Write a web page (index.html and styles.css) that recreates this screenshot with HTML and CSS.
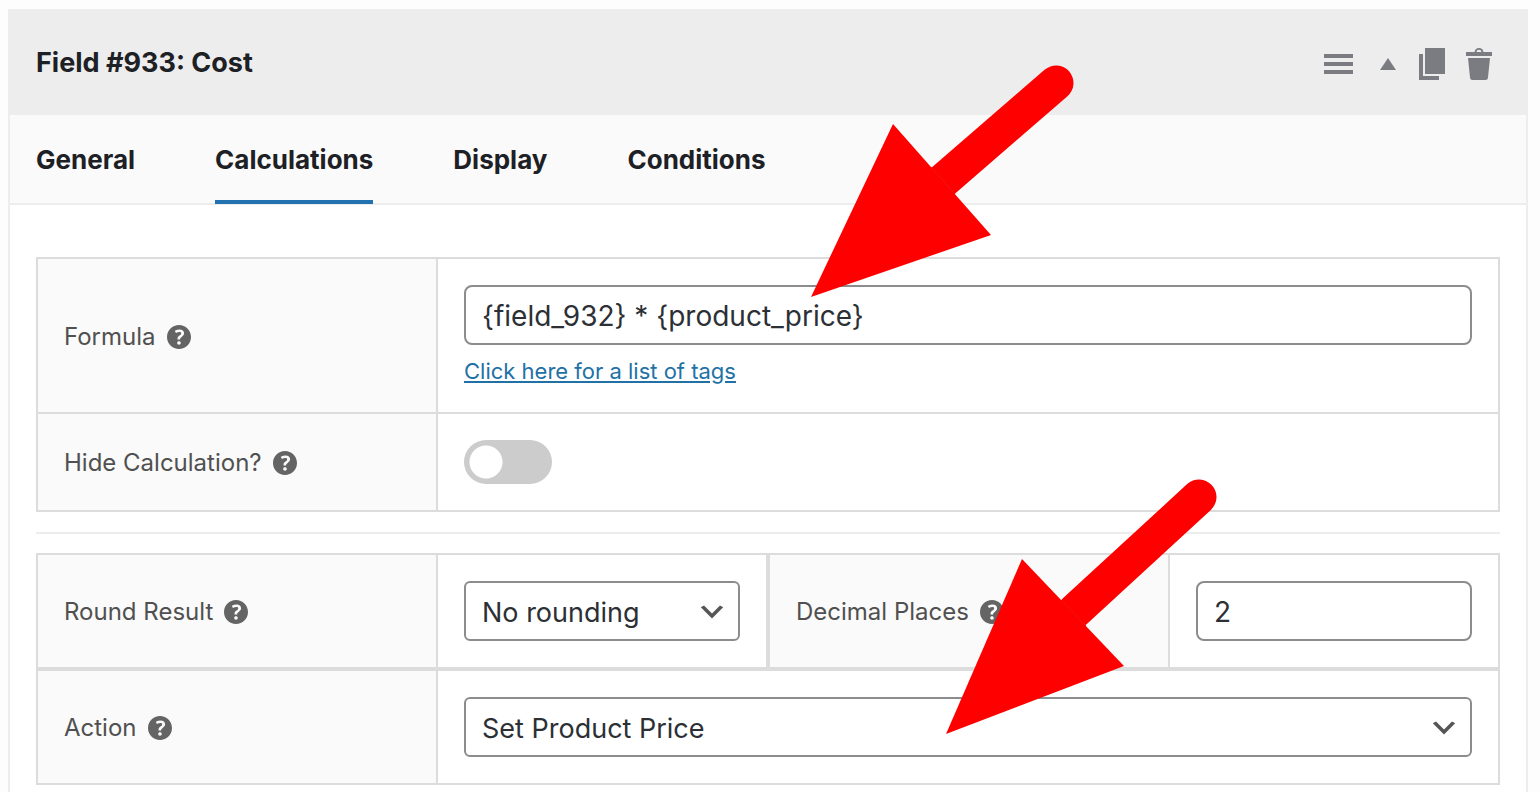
FILE: index.html
```html
<!DOCTYPE html>
<html lang="en">
<head>
<meta charset="utf-8">
<title>Field #933: Cost</title>
<link rel="stylesheet" href="styles.css">
</head>
<body>
<svg class="symbols" aria-hidden="true">
  <symbol id="help" viewBox="3 3 14 14"><path d="M17 10c0-3.87-3.14-7-7-7-3.87 0-7 3.13-7 7s3.13 7 7 7c3.86 0 7-3.13 7-7zm-6.3 1.48H9.14v-.43c0-.38.08-.7.24-.98s.46-.57.88-.89c.41-.29.68-.53.81-.71.14-.18.2-.39.2-.62 0-.25-.09-.44-.28-.58-.19-.13-.45-.19-.79-.19-.58 0-1.25.19-2 .57l-.64-1.28c.87-.49 1.8-.74 2.77-.74.81 0 1.45.2 1.92.58.48.39.71.91.71 1.55 0 .43-.09.8-.29 1.11-.19.32-.57.67-1.11 1.06-.38.28-.61.49-.71.63-.1.15-.15.34-.15.57v.35zm-1.47 2.74c-.18-.17-.27-.42-.27-.73 0-.33.08-.58.26-.75s.43-.25.77-.25c.32 0 .57.09.75.26s.27.42.27.74c0 .3-.09.55-.27.72-.18.18-.43.27-.75.27-.33 0-.58-.09-.76-.26z"/></symbol>
  <symbol id="chevron" viewBox="0 0 20 20"><path d="M5 6l5 5 5-5 2 1-7 7-7-7 2-1z"/></symbol>
</svg>

<main class="card">
  <header class="card-header">
    <h1 class="card-title">Field #933: Cost</h1>
    <div class="actions">
      <button class="action" type="button" aria-label="Reorder"><svg viewBox="0 -4 32 36"><path d="M2 6h29v4H2zM2 14h29v4H2zM2 22h29v4H2z"/></svg></button>
      <button class="action" type="button" aria-label="Collapse"><svg viewBox="0 -4 32 36"><path d="M11 22l8-12 8 12z"/></svg></button>
      <button class="action" type="button" aria-label="Duplicate"><svg viewBox="0 -4 32 36"><path d="M9 0h20v26H9zM3 6h4v22h16v4H3z"/></svg></button>
      <button class="action" type="button" aria-label="Delete"><svg viewBox="0 -4 32 36"><path d="M3 4h8.500C12 1.500 13.500 0 16 0s4 1.500 4.500 4H29v4H3zM13.500 4h5c-.3-1.500-1-2.300-2.500-2.300S13.800 2.500 13.500 4zM5 10h22l-2 19.500c-.2 1.700-1 2.500-2.500 2.500h-13C8 32 7.200 31.200 7 29.500z" fill-rule="evenodd"/></svg></button>
    </div>
  </header>

  <nav class="tabs">
    <a class="tab" href="#general">General</a>
    <a class="tab tab-active" href="#calculations" aria-current="page">Calculations</a>
    <a class="tab" href="#display">Display</a>
    <a class="tab" href="#conditions">Conditions</a>
  </nav>

  <div class="panel">
    <section class="group">
      <div class="field">
        <div class="field-label"><label for="formula">Formula</label><svg class="help"><use href="#help"/></svg></div>
        <div class="field-control">
          <input class="control" id="formula" type="text" value="{field_932} * {product_price}">
          <a class="tags-link" href="#tags">Click here for a list of tags</a>
        </div>
      </div>
      <div class="field">
        <div class="field-label"><label for="hide">Hide Calculation?</label><svg class="help"><use href="#help"/></svg></div>
        <div class="field-control"><input class="toggle" id="hide" type="checkbox"></div>
      </div>
    </section>

    <hr class="divider">

    <section class="group group-wide">
      <div class="pair">
        <div class="field">
          <div class="field-label"><label for="round">Round Result</label><svg class="help"><use href="#help"/></svg></div>
          <div class="field-control">
            <div class="select"><select class="control" id="round"><option>No rounding</option></select><svg class="chevron"><use href="#chevron"/></svg></div>
          </div>
        </div>
        <div class="field">
          <div class="field-label"><label for="decimals">Decimal Places</label><svg class="help"><use href="#help"/></svg></div>
          <div class="field-control"><input class="control" id="decimals" type="text" value="2"></div>
        </div>
      </div>
      <div class="field">
        <div class="field-label"><label for="action">Action</label><svg class="help"><use href="#help"/></svg></div>
        <div class="field-control">
          <div class="select"><select class="control" id="action"><option>Set Product Price</option></select><svg class="chevron"><use href="#chevron"/></svg></div>
        </div>
      </div>
    </section>
  </div>
</main>

<svg class="arrows" width="1540" height="792" viewBox="0 0 1540 792" aria-hidden="true">
  <path class="shaft" d="M1056 83L944 180"/>
  <path d="M811 297L893 124 991 235z"/>
  <path class="seam" d="M931 167L955 194"/>
  <path class="shaft" d="M1199 497L1075 611"/>
  <path d="M946 734L1022 559 1124 666z"/>
  <path class="seam" d="M1061 600L1086 626"/>
</svg>
</body>
</html>
```
FILE: styles.css
```css
* {
  box-sizing: border-box;
}

body {
  margin: 0;
  padding: 9px 12px 0 8px;
  background: #fdfdfd;
  color: #1d2024;
  font-family: Inter, "Liberation Sans", sans-serif;
}

.symbols {
  display: none;
}

.card {
  min-height: calc(100vh - 9px);
  border: 2px solid #ededed;
  border-bottom: 0;
  background: #fff;
}

.card-header {
  display: flex;
  align-items: center;
  justify-content: space-between;
  height: 104px;
  padding: 0 31px 2px 26px;
  background: #ededed;
}

.card-title {
  margin: 0;
  padding-top: 2px;
  font-size: 27px;
  line-height: 32px;
  font-weight: 700;
}

.actions {
  display: flex;
  gap: 15px;
}

.action {
  width: 32px;
  height: 36px;
  padding: 0;
  border: 0;
  background: none;
}

.action svg {
  display: block;
  width: 32px;
  height: 36px;
  fill: #7b7c81;
}

.tabs {
  display: flex;
  gap: 80px;
  padding: 0 26px;
  border-bottom: 2px solid #ededed;
  background: #fafafa;
}

.tab {
  height: 89px;
  margin-bottom: -1px;
  border-bottom: 4px solid transparent;
  color: inherit;
  font-size: 26px;
  line-height: 90px;
  font-weight: 700;
  text-decoration: none;
}

.tab-active {
  border-color: #2271b1;
}

.panel {
  padding: 52px 26px 0;
}

.group {
  display: grid;
  gap: 2px;
  border: 2px solid #dcdcdc;
  background: #dcdcdc;
}

.group-wide {
  gap: 4px;
}

.pair {
  display: grid;
  grid-template-columns: 1fr 1fr;
  gap: 4px;
}

.field {
  display: grid;
  grid-template-columns: 398px 1fr;
  gap: 2px;
}

.field-label {
  display: flex;
  align-items: center;
  gap: 11px;
  padding: 2px 26px 0;
  background: #fafafa;
  color: #505050;
  font-size: 24px;
  line-height: 30px;
}

.help {
  width: 24px;
  height: 24px;
  fill: #646464;
}

.field-control {
  min-width: 0;
  padding: 26px;
  background: #fff;
}

.control {
  display: block;
  width: 100%;
  height: 60px;
  margin: 0;
  padding: 2px 16px 0;
  border: 2px solid #8c8c8c;
  border-radius: 8px;
  background: #fff;
  color: #2c3035;
  font-family: inherit;
  font-size: 28px;
  appearance: none;
}

.select {
  position: relative;
}

.select .control {
  border-radius: 6px;
  font-size: 27px;
}

.chevron {
  position: absolute;
  top: 15px;
  right: 12px;
  width: 32px;
  height: 32px;
  fill: #555;
  pointer-events: none;
}

.tags-link {
  display: table;
  margin-top: 11px;
  color: #2271a6;
  font-size: 22px;
  line-height: 30px;
}

.toggle {
  display: block;
  width: 88px;
  height: 44px;
  margin: 0;
  border-radius: 22px;
  background: radial-gradient(circle at 22px 22px, #fff 16px, #ccc 17px);
  appearance: none;
}

.divider {
  height: 2px;
  margin: 20px 0 19px;
  border: 0;
  background: #ededed;
}

.arrows {
  position: absolute;
  top: 0;
  left: 0;
  fill: #f00;
  pointer-events: none;
}

.shaft {
  stroke: #f00;
  stroke-width: 35;
  stroke-linecap: round;
}

.seam {
  stroke: #f01414;
  stroke-width: 1;
}
```
